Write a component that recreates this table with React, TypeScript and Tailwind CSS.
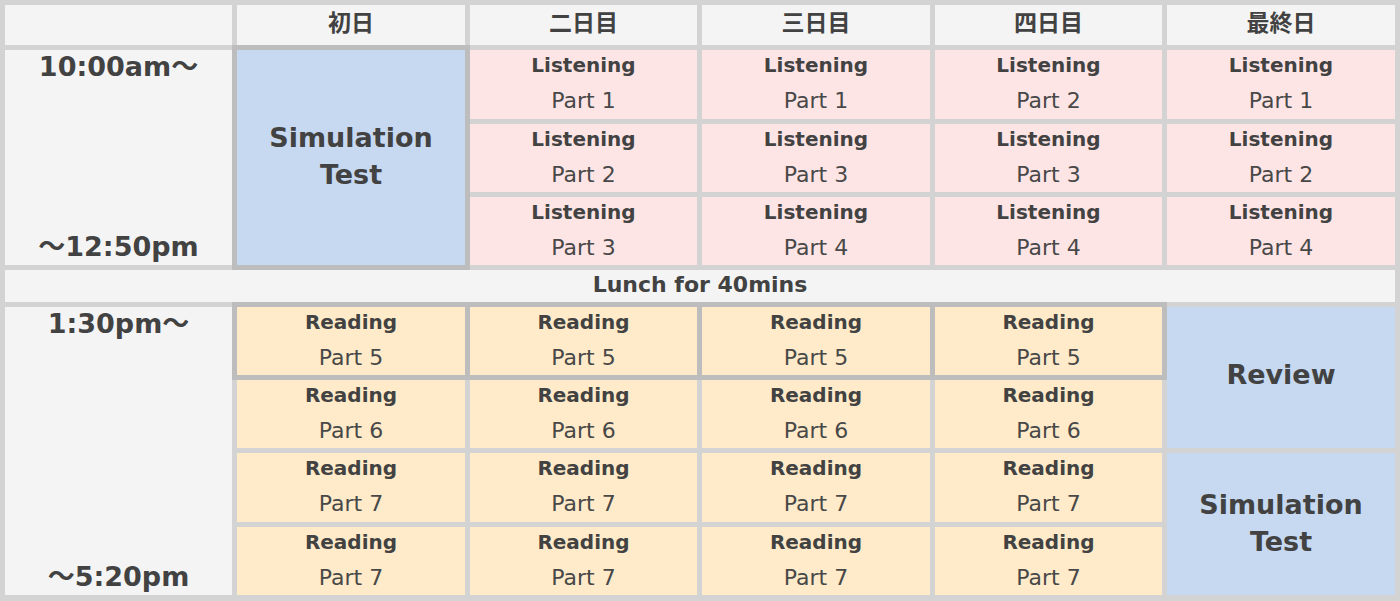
import type { ReactNode } from 'react';

const font = { fontFamily: '"DejaVu Sans", "Noto Sans CJK JP", sans-serif' };

const Slot = ({ title, part, className }: { title: string; part: string; className: string }) => (
  <div className={`flex flex-col items-center justify-center leading-[36px] pb-[3px] ${className}`}>
    <span className="font-bold text-[20px]">{title}</span>
    <span className="text-[22px] text-[#484848]">{part}</span>
  </div>
);

const Big = ({ children, className }: { children: ReactNode; className: string }) => (
  <div className={`flex flex-col items-center justify-center bg-[#c6d9f1] font-bold text-[27px] leading-[37px] ${className}`}>
    {children}
  </div>
);

const days = ['初日', '二日目', '三日目', '四日目', '最終日'];
const dayCols = ['col-start-2', 'col-start-3', 'col-start-4', 'col-start-5', 'col-start-6'];

const listening: string[][] = [
  ['Part 1', 'Part 2', 'Part 3'],
  ['Part 1', 'Part 3', 'Part 4'],
  ['Part 2', 'Part 3', 'Part 4'],
  ['Part 1', 'Part 2', 'Part 4'],
];

const listenCols = ['col-start-3', 'col-start-4', 'col-start-5', 'col-start-6'];
const listenRows = ['row-start-2', 'row-start-3', 'row-start-4'];
const readCols = ['col-start-2', 'col-start-3', 'col-start-4', 'col-start-5'];
const readRows = ['row-start-6', 'row-start-7', 'row-start-8', 'row-start-9'];
const readParts = ['Part 5', 'Part 6', 'Part 7', 'Part 7'];

export default function App() {
  return (
    <div
      style={font}
      className="w-[1400px] h-[601px] bg-[#d3d3d3] text-[#424242] pt-[5px] px-[5px] pb-[6px] grid gap-[5px] grid-cols-[227px_228px_227px_228px_227px_228px] grid-rows-[40px_69px_68px_68px_32px_68px_68px_69px_68px]"
    >
      <div className="col-start-1 row-start-1 bg-[#f4f4f4]" />
      {days.map((d, i) => (
        <div
          key={d}
          className={`row-start-1 ${dayCols[i]} bg-[#f4f4f4] flex items-center justify-center font-bold text-[23px] pb-[4px]`}
        >
          {d}
        </div>
      ))}

      <div className="col-start-1 row-start-2 row-span-3 bg-[#f4f4f4] flex flex-col items-center justify-between font-bold text-[27px] leading-[32px] pt-[1px] pb-[2px]">
        <span>10:00am〜</span>
        <span>〜12:50pm</span>
      </div>

      <Big className="col-start-2 row-start-2 row-span-3 shadow-[0_0_0_5px_#bdbdbd] pb-[3px]">
        <span>Simulation</span>
        <span>Test</span>
      </Big>

      {listening.map((col, ci) =>
        col.map((p, ri) => (
          <Slot
            key={`${ci}-${ri}`}
            title="Listening"
            part={p}
            className={`${listenCols[ci]} ${listenRows[ri]} bg-[#fee5e5]`}
          />
        ))
      )}

      <div className="col-start-1 col-span-6 row-start-5 bg-[#f4f4f4] flex items-center justify-center font-bold text-[22px] pb-[3px]">
        Lunch for 40mins
      </div>

      <div className="col-start-1 row-start-6 row-span-4 bg-[#f4f4f4] flex flex-col items-center justify-between font-bold text-[27px] leading-[32px] pt-[1px] pb-[2px]">
        <span>1:30pm〜</span>
        <span>〜5:20pm</span>
      </div>

      {readRows.map((r, ri) =>
        readCols.map((c) => (
          <Slot
            key={`${r}-${c}`}
            title="Reading"
            part={readParts[ri]}
            className={`${c} ${r} bg-[#ffebc9] ${ri === 0 ? 'shadow-[0_0_0_5px_#bdbdbd]' : ''}`}
          />
        ))
      )}

      <Big className="col-start-6 row-start-6 row-span-2 pb-[6px]">
        <span>Review</span>
      </Big>
      <Big className="col-start-6 row-start-8 row-span-2 pb-[3px]">
        <span>Simulation</span>
        <span>Test</span>
      </Big>
    </div>
  );
}
